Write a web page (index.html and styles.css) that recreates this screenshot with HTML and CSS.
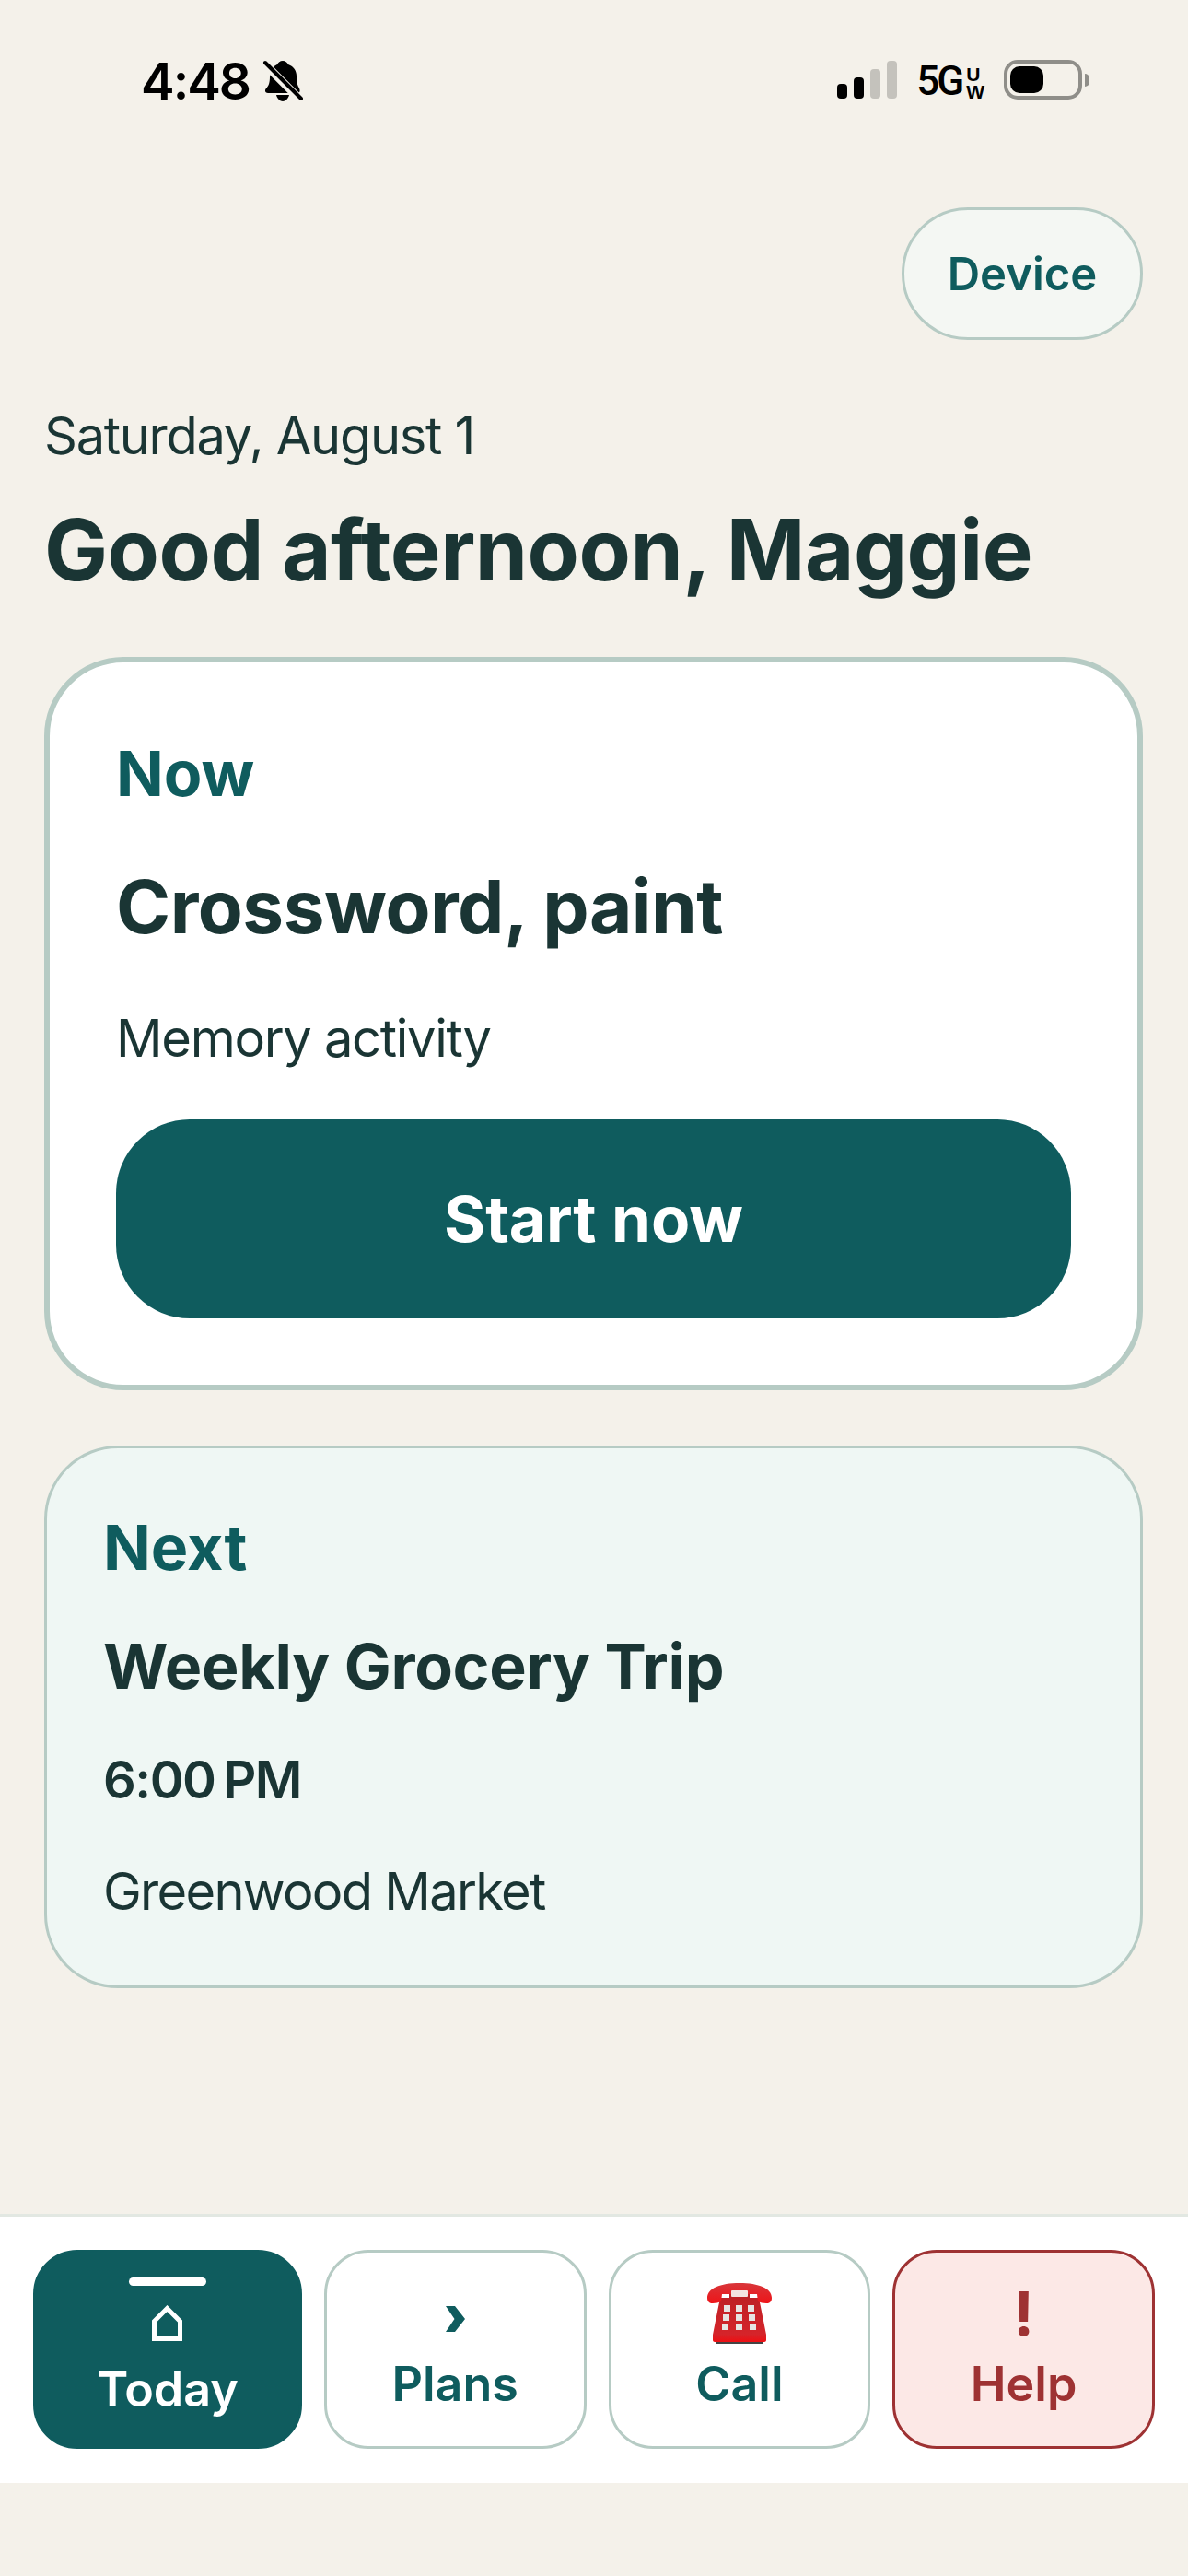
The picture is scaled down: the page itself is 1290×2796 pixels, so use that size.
FILE: index.html
```html
<!DOCTYPE html>
<html lang="en">
<head>
    <meta charset="UTF-8">
    <meta name="viewport" content="width=device-width, initial-scale=1.0">
    <title>Today</title>
    <link rel="stylesheet" href="styles.css">
</head>
<body>

    <!-- Status bar -->
    <div class="status-bar">
        <div class="status-left">
            <span class="status-time">4:48</span>
            <svg class="bell" width="44" height="46" viewBox="0 0 44 46">
                <path d="M22 1c3 0 5 2 6 4 6 2 9 7 9 13 0 6 1 10 3 13 1 2 1 5-2 5H6c-3 0-4-3-2-5 3-3 4-7 4-13 0-6 3-11 8-13 1-2 3-4 6-4z" fill="#000"/>
                <path d="M15 38h14c-1 4-4 7-7 7s-6-3-7-7z" fill="#000"/>
                <path d="M1 3l41 41" stroke="#f4f1ea" stroke-width="9"/>
                <path d="M3 3l39 39" stroke="#000" stroke-width="4" stroke-linecap="round"/>
            </svg>
        </div>
        <div class="status-right">
            <div class="signal">
                <span class="signal-bar bar-1"></span>
                <span class="signal-bar bar-2"></span>
                <span class="signal-bar bar-3"></span>
                <span class="signal-bar bar-4"></span>
            </div>
            <div class="network">
                <span class="network-main">5G</span>
                <span class="network-sub">U<br>W</span>
            </div>
            <div class="battery">
                <div class="battery-body"><span class="battery-level"></span></div>
                <span class="battery-nib"></span>
            </div>
        </div>
    </div>

    <main class="content">
        <div class="top-row">
            <button class="device-btn">Device</button>
        </div>

        <p class="date">Saturday, August 1</p>
        <h1 class="greeting">Good afternoon, Maggie</h1>

        <section class="card card-now">
            <h2 class="card-label label-now">Now</h2>
            <h3 class="now-title">Crossword, paint</h3>
            <p class="card-text now-text">Memory activity</p>
            <button class="start-btn">Start now</button>
        </section>

        <section class="card card-next">
            <h2 class="card-label label-next">Next</h2>
            <h3 class="next-title">Weekly Grocery Trip</h3>
            <p class="next-time">6:00 PM</p>
            <p class="card-text next-place">Greenwood Market</p>
        </section>
    </main>

    <!-- Bottom navigation -->
    <nav class="bottom-nav">
        <a class="nav-item nav-active">
            <span class="nav-marker"></span>
            <svg class="icon-home" width="33" height="39" viewBox="0 0 33 39">
                <path d="M2.5 36.5V17.5L16.5 3.5L30.5 17.5V36.5Z" fill="none" stroke="#fff" stroke-width="5"/>
            </svg>
            <span class="nav-label">Today</span>
        </a>
        <a class="nav-item">
            <span class="nav-icon icon-chevron">
                <svg width="21" height="28" viewBox="0 0 21 28">
                    <path d="M0 0H10L21 14L10 28H0L9.5 14Z" fill="#0f5c5e"/>
                </svg>
            </span>
            <span class="nav-label">Plans</span>
        </a>
        <a class="nav-item">
            <span class="nav-icon">
                <svg width="70" height="66" viewBox="0 0 70 66">
                    <defs>
                        <linearGradient id="phoneBody" x1="0" y1="0" x2="0" y2="1">
                            <stop offset="0" stop-color="#b92024"/>
                            <stop offset="0.85" stop-color="#d5242a"/>
                            <stop offset="1" stop-color="#ee0f12"/>
                        </linearGradient>
                        <linearGradient id="phoneTop" x1="0" y1="0" x2="0" y2="1">
                            <stop offset="0" stop-color="#d8363a"/>
                            <stop offset="1" stop-color="#ee1418"/>
                        </linearGradient>
                    </defs>
                    <rect x="9" y="63" width="52" height="3" fill="#444"/>
                    <path d="M14 16h10V8h22v8h10l8 40v6c0 1-1 2-2 2H8c-1 0-2-1-2-2v-6z" fill="url(#phoneBody)"/>
                    <path d="M0 16C0 6 14 0 35 0s35 6 35 16c0 4-2 6-6 6-3 0-7-1-9-2l-1-8H16l-1 8c-2 1-6 2-9 2-4 0-6-2-6-6z" fill="url(#phoneTop)"/>
                    <rect x="26" y="8" width="18" height="7" rx="1" fill="#f3e4e1"/>
                    <g fill="#e6e4e2">
                        <rect x="18" y="24" width="7" height="7"/><rect x="31" y="24" width="7" height="7"/><rect x="44" y="24" width="7" height="7"/>
                        <rect x="17" y="34" width="7" height="7"/><rect x="31" y="34" width="7" height="7"/><rect x="45" y="34" width="7" height="7"/>
                        <rect x="16" y="44" width="7" height="7"/><rect x="31" y="44" width="7" height="7"/><rect x="46" y="44" width="7" height="7"/>
                    </g>
                </svg>
            </span>
            <span class="nav-label">Call</span>
        </a>
        <a class="nav-item nav-help">
            <span class="nav-icon help-mark">!</span>
            <span class="nav-label">Help</span>
        </a>
    </nav>

</body>
</html>
```

FILE: styles.css
```css
* {
    box-sizing: border-box;
}
body {
    font-family: Inter, "Liberation Sans", sans-serif;
    background-color: #f4f1ea;
    color: #1a3534;
    width: 1290px;
    height: 2796px;
    margin: 0;
    overflow: hidden;
}
h1, h2, h3, p {
    margin: 0;
}

/* Status bar */
.status-bar {
    display: flex;
    justify-content: space-between;
    height: 130px;
    padding: 0 107px 0 153px;
}
.status-left {
    display: flex;
    align-items: flex-start;
    gap: 14px;
    padding-top: 65px;
}
.status-time {
    font-size: 55px;
    font-weight: 600;
    line-height: 46px;
    letter-spacing: -2px;
    color: #000;
}
.status-right {
    display: flex;
    align-items: flex-start;
    padding-top: 65px;
}
.signal {
    display: flex;
    align-items: flex-end;
    gap: 7px;
    height: 42px;
    margin-right: 21px;
}
.signal-bar {
    width: 11px;
    border-radius: 4px;
    background-color: #000;
}
.bar-1 { height: 16px; }
.bar-2 { height: 23px; }
.bar-3 { height: 32px; background-color: #c4c2bc; }
.bar-4 { height: 41px; background-color: #c4c2bc; }
.network {
    display: flex;
    color: #000;
    margin-right: 21px;
}
.network-main {
    width: 54px;
    font-family: Roboto, sans-serif;
    font-size: 44px;
    font-weight: 500;
    line-height: 46px;
    letter-spacing: -3px;
}
.network-sub {
    margin-top: 6px;
    font-family: "Liberation Sans", sans-serif;
    font-size: 21px;
    font-weight: 700;
    line-height: 19px;
}
.battery {
    display: flex;
    align-items: center;
    height: 43px;
}
.battery-body {
    width: 85px;
    height: 43px;
    padding: 3px;
    border: 4px solid #8f8e89;
    border-radius: 15px;
}
.battery-level {
    display: block;
    width: 36px;
    height: 29px;
    border-radius: 10px;
    background-color: #000;
}
.battery-nib {
    width: 5px;
    height: 14px;
    margin-left: 3px;
    border-radius: 0 6px 6px 0;
    background-color: #8f8e89;
}

/* Main content */
.content {
    padding: 0 49px 0 48px;
}
.top-row {
    display: flex;
    justify-content: flex-end;
    padding-top: 95px;
}
.device-btn {
    width: 262px;
    height: 144px;
    border: 3px solid #b6cbc4;
    border-radius: 72px;
    background-color: #f4f7f3;
    color: #0f5c5e;
    font-family: inherit;
    font-size: 49px;
    font-weight: 600;
}
.date {
    margin-top: 70px;
    font-size: 56px;
    line-height: 68px;
    letter-spacing: -1.3px;
}
.greeting {
    margin-top: 32px;
    font-size: 92px;
    font-weight: 700;
    line-height: 116px;
    letter-spacing: -0.5px;
    word-spacing: -1px;
}

.card {
    background-color: #fff;
}
.card-now {
    margin-top: 58px;
    height: 796px;
    padding: 80px 72px 0;
    border: 6px solid #b6cbc4;
    border-radius: 86px;
}
.card-next {
    margin-top: 60px;
    height: 589px;
    padding: 67px 61px 0;
    border: 3px solid #b6cbc4;
    border-radius: 80px;
    background-color: #eff7f4;
}
.card-label {
    font-size: 68px;
    font-weight: 700;
    line-height: 80px;
    color: #0f5c5e;
}
.now-title {
    margin-top: 55px;
    font-size: 80px;
    font-weight: 700;
    line-height: 100px;
    letter-spacing: -0.5px;
}
.now-text {
    margin-top: 59px;
    letter-spacing: -1.3px;
}
.card-text {
    font-size: 56px;
    line-height: 68px;
}
.start-btn {
    display: block;
    width: 100%;
    height: 216px;
    margin-top: 54px;
    border: none;
    border-radius: 80px;
    background-color: #0f5c5e;
    color: #fff;
    font-family: inherit;
    font-size: 69px;
    font-weight: 700;
}
.next-title {
    margin-top: 47px;
    font-size: 68px;
    font-weight: 700;
    line-height: 84px;
    letter-spacing: -0.3px;
}
.next-time {
    margin-top: 48px;
    font-size: 56px;
    font-weight: 600;
    line-height: 68px;
    letter-spacing: -1.5px;
    word-spacing: -4px;
}
.next-place {
    margin-top: 53px;
    letter-spacing: -1.7px;
}

/* Bottom navigation */
.bottom-nav {
    display: grid;
    grid-template-columns: 291fr 284fr 284fr 284fr;
    column-gap: 24px;
    height: 292px;
    margin-top: 245px;
    padding: 36px 36px 0;
    border-top: 3px solid #e2e8e2;
    background-color: #fff;
}
.nav-item {
    display: flex;
    flex-direction: column;
    align-items: center;
    height: 216px;
    padding-top: 33px;
    border: 3px solid #b6cbc4;
    border-radius: 48px;
    color: #0f5c5e;
}
.nav-icon {
    display: flex;
    align-items: center;
    justify-content: center;
    height: 66px;
}
.icon-chevron {
    padding-top: 12px;
}
.nav-label {
    margin-top: 14px;
    font-size: 52px;
    font-weight: 600;
    line-height: 60px;
}
.nav-active {
    padding-top: 27px;
    border-color: #0f5c5e;
    background-color: #0f5c5e;
    color: #fff;
}
.nav-marker {
    width: 84px;
    height: 9px;
    border-radius: 5px;
    background-color: #fff;
}
.icon-home {
    margin-top: 21px;
}
.nav-active .nav-label {
    margin-top: 23px;
}
.nav-help {
    border-color: #9e3233;
    background-color: #fce8e6;
    color: #9e3233;
}
.help-mark {
    font-size: 66px;
    font-weight: 700;
}
```
